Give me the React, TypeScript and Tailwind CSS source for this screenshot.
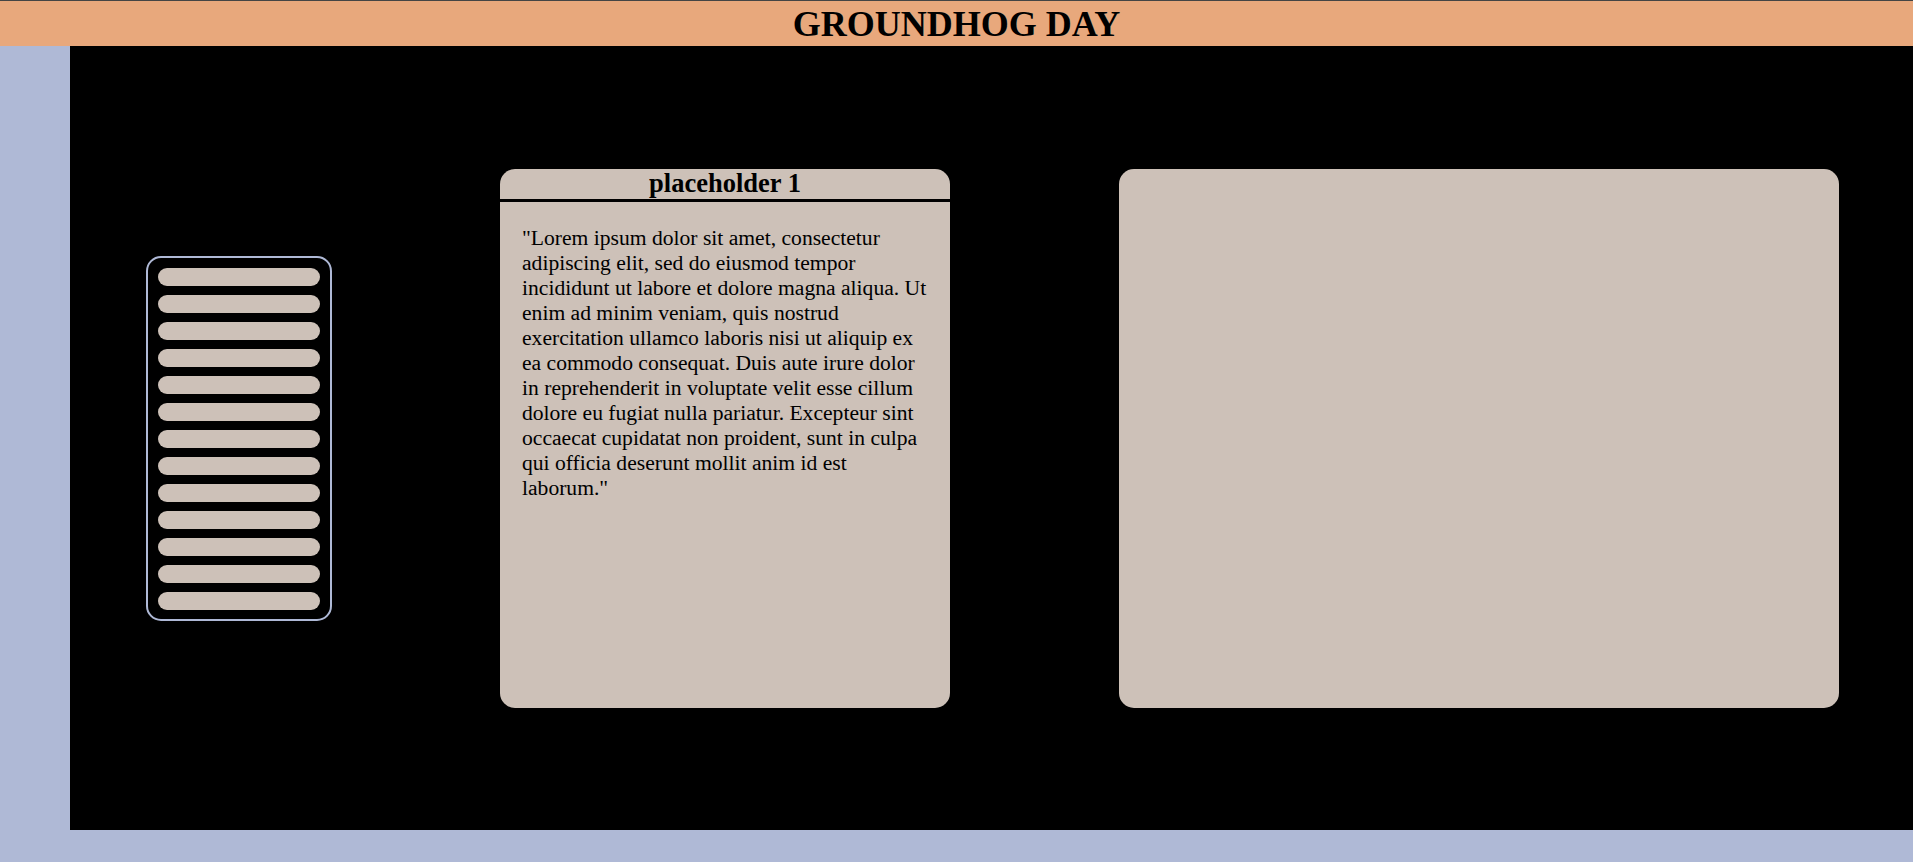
const LOREM =
  '"Lorem ipsum dolor sit amet, consectetur adipiscing elit, sed do eiusmod tempor incididunt ut labore et dolore magna aliqua. Ut enim ad minim veniam, quis nostrud exercitation ullamco laboris nisi ut aliquip ex ea commodo consequat. Duis aute irure dolor in reprehenderit in voluptate velit esse cillum dolore eu fugiat nulla pariatur. Excepteur sint occaecat cupidatat non proident, sunt in culpa qui officia deserunt mollit anim id est laborum."'

function DayList() {
  const rows = Array.from({ length: 13 }, (_, i) => i)
  return (
    <div className="w-[186px] shrink-0 rounded-[15px] border-2 border-[#afb9d6] px-[10px] pt-[10px] pb-[9px] flex flex-col gap-[9px]">
      {rows.map((i) => (
        <div key={i} className="h-[18px] rounded-full bg-[#cdc1b8]" />
      ))}
    </div>
  )
}

function TextCard() {
  return (
    <div className="w-[450px] h-[539px] shrink-0 rounded-[15px] bg-[#cdc1b8] overflow-hidden flex flex-col">
      <h2 className="h-[33px] flex items-center justify-center text-[26.5px] font-bold leading-none border-b-[3px] border-black">
        placeholder 1
      </h2>
      <p className="px-[22px] pt-[24px] text-[21.6px] leading-[25px]">{LOREM}</p>
    </div>
  )
}

export default function App() {
  return (
    <div className="w-[1913px] h-[862px] bg-[#afb9d6] text-black font-['Liberation_Serif',serif] flex flex-col">
      <header className="h-[46px] shrink-0 border-t border-[#444] bg-[#e8a87c] flex items-center justify-center">
        <h1 className="text-[36px] font-bold leading-none">GROUNDHOG DAY</h1>
      </header>
      <div className="flex">
        <div className="w-[70px] shrink-0" />
        <main className="h-[784px] flex-1 bg-black flex items-center pl-[76px]">
          <DayList />
          <div className="w-[168px] shrink-0" />
          <TextCard />
          <div className="w-[169px] shrink-0" />
          <div className="w-[720px] h-[539px] shrink-0 rounded-[15px] bg-[#cdc1b8]" />
        </main>
      </div>
    </div>
  )
}
